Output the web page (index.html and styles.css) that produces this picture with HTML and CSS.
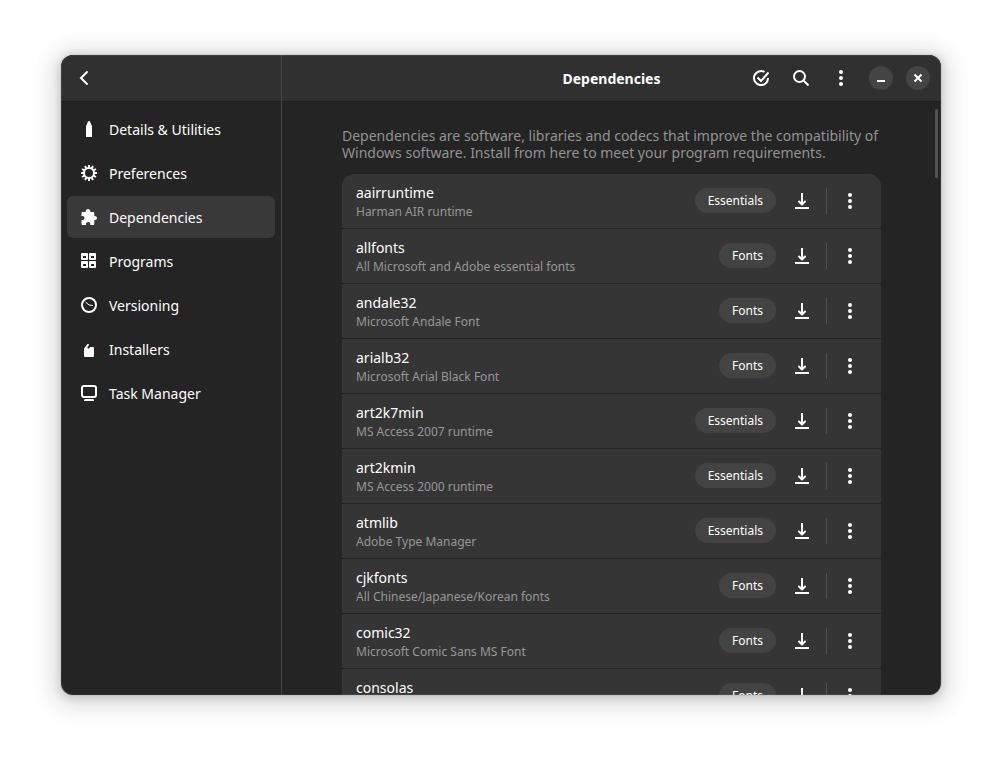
FILE: index.html
```html
<!DOCTYPE html>
<html lang="en">
<head>
<meta charset="utf-8">
<title>Dependencies</title>
<link rel="stylesheet" href="styles.css">
</head>
<body>
<svg class="sprite" aria-hidden="true">
  <symbol id="i-download" viewBox="0 0 16 16"><path d="M7 0h2v11H7zM1 14h14v2H1z"/><path class="line" stroke-linecap="round" stroke-linejoin="round" d="M5 8.500 8 11.500l3-3"/></symbol>
  <symbol id="i-more" viewBox="0 0 16 16"><circle cx="8" cy="2" r="2"/><circle cx="8" cy="8" r="2"/><circle cx="8" cy="14" r="2"/></symbol>
</svg>
<div class="window">
  <aside class="sidebar">
    <header class="bar bar-side">
      <button class="icon-button" aria-label="Back"><svg class="icon" viewBox="0 0 16 16"><path class="line chevron" d="M11 2 5 8l6 6"/></svg></button>
    </header>
    <nav class="nav">
      <a class="nav-item" href="#details"><svg class="icon" viewBox="0 0 16 16"><path d="M8 0c1 0 1.300.8 1.600 2L11 5v11H5V5l1.400-3C6.700.8 7 0 8 0z"/></svg>Details &amp; Utilities</a>
      <a class="nav-item" href="#preferences"><svg class="icon" viewBox="0 0 16 16"><circle class="line" cx="8" cy="8" r="5"/><path class="teeth" d="M8 0v3M8 13v3M0 8h3M13 8h3M4 1.070l1.500 2.600M10.500 12.330l1.500 2.600M1.070 4l2.600 1.500M12.330 10.500l2.600 1.500M1.070 12l2.600-1.500M12.330 5.500l2.600-1.500M4 14.930l1.500-2.600M10.500 3.670l1.500-2.600"/></svg>Preferences</a>
      <a class="nav-item active" href="#dependencies" aria-current="page"><svg class="icon" viewBox="0 0 16 16"><path d="M7 0c1.400 0 2.300 1 2.300 2.200V3H12c.8 0 1.300.5 1.300 1.300V7h.5C15.200 7 16 8 16 9s-.8 2-2.200 2h-.5v3.700c0 .8-.5 1.300-1.300 1.300H9.300v-.8c0-1.300-.9-2.200-2.100-2.200S5 13.900 5 15.200v.8H2c-.9 0-1.500-.5-1.500-1.300V11h1c1.200 0 2-.8 2-2s-.8-2-2-2h-1V4.300C.5 3.500 1.100 3 2 3h2.700v-.8C4.700 1 5.600 0 7 0z"/></svg>Dependencies</a>
      <a class="nav-item" href="#programs"><svg class="icon" viewBox="0 0 16 16"><path fill-rule="evenodd" d="M1 0h5q1 0 1 1v5q0 1-1 1H1q-1 0-1-1V1q0-1 1-1zm1 3v2h3V3zM9 0h5q1 0 1 1v5q0 1-1 1H9q-1 0-1-1V1q0-1 1-1zm1 3v2h3V3zM1 8h5q1 0 1 1v5q0 1-1 1H1q-1 0-1-1V9q0-1 1-1zm1 3v2h3v-2zM9 8h5q1 0 1 1v5q0 1-1 1H9q-1 0-1-1V9q0-1 1-1zm1 3v2h3v-2z"/></svg>Programs</a>
      <a class="nav-item" href="#versioning"><svg class="icon" viewBox="0 0 16 16"><circle class="line" cx="8" cy="8" r="7"/><path class="hand" d="M4.500 5 8 8l4 .5"/></svg>Versioning</a>
      <a class="nav-item" href="#installers"><svg class="icon" viewBox="0 0 16 16"><path d="M3 7.500 6.500 3h1.300v1.200L6.500 6v1.500h1.300L9.300 6H12q1 0 1 1v8q0 1-1 1H4q-1 0-1-1z"/></svg>Installers</a>
      <a class="nav-item" href="#tasks"><svg class="icon" viewBox="0 0 16 16"><rect class="line" x="1" y="1" width="14" height="11" rx="2"/><path d="M4 14h8q1 0 1 2H3q0-2 1-2z"/></svg>Task Manager</a>
    </nav>
  </aside>
  <main class="content">
    <header class="bar bar-main">
      <h1 class="title">Dependencies</h1>
      <div class="bar-actions">
        <button class="icon-button" aria-label="Installed"><svg class="icon" viewBox="0 0 16 16"><path class="line" d="M11.500 2A7 7 0 1 0 15 8M4.500 7.500 8 11l7.500-8.500"/></svg></button>
        <button class="icon-button" aria-label="Search"><svg class="icon" viewBox="0 0 16 16"><circle class="line" cx="6.500" cy="6.500" r="5.500"/><path class="line" d="m10.500 10.500 5 5"/></svg></button>
        <button class="icon-button" aria-label="Main menu"><svg class="icon"><use href="#i-more"/></svg></button>
        <div class="controls">
          <button class="control" aria-label="Minimize"><svg class="icon" viewBox="0 0 16 16"><path d="M4 10h8v2H4z"/></svg></button>
          <button class="control" aria-label="Close"><svg class="icon" viewBox="0 0 16 16"><path class="line" d="m4.500 4.500 7 7m0-7-7 7"/></svg></button>
        </div>
      </div>
    </header>
    <div class="scroller">
      <p class="description">Dependencies are software, libraries and codecs that improve the compatibility of Windows software. Install from here to meet your program requirements.</p>
      <ul class="list">
        <li class="row"><div class="names"><span class="name">aairruntime</span><span class="detail">Harman AIR runtime</span></div><button class="tag">Essentials</button><button class="icon-button" aria-label="Install aairruntime"><svg class="icon"><use href="#i-download"/></svg></button><span class="separator"></span><button class="icon-button" aria-label="More about aairruntime"><svg class="icon"><use href="#i-more"/></svg></button></li>
        <li class="row"><div class="names"><span class="name">allfonts</span><span class="detail">All Microsoft and Adobe essential fonts</span></div><button class="tag">Fonts</button><button class="icon-button" aria-label="Install allfonts"><svg class="icon"><use href="#i-download"/></svg></button><span class="separator"></span><button class="icon-button" aria-label="More about allfonts"><svg class="icon"><use href="#i-more"/></svg></button></li>
        <li class="row"><div class="names"><span class="name">andale32</span><span class="detail">Microsoft Andale Font</span></div><button class="tag">Fonts</button><button class="icon-button" aria-label="Install andale32"><svg class="icon"><use href="#i-download"/></svg></button><span class="separator"></span><button class="icon-button" aria-label="More about andale32"><svg class="icon"><use href="#i-more"/></svg></button></li>
        <li class="row"><div class="names"><span class="name">arialb32</span><span class="detail">Microsoft Arial Black Font</span></div><button class="tag">Fonts</button><button class="icon-button" aria-label="Install arialb32"><svg class="icon"><use href="#i-download"/></svg></button><span class="separator"></span><button class="icon-button" aria-label="More about arialb32"><svg class="icon"><use href="#i-more"/></svg></button></li>
        <li class="row"><div class="names"><span class="name">art2k7min</span><span class="detail">MS Access 2007 runtime</span></div><button class="tag">Essentials</button><button class="icon-button" aria-label="Install art2k7min"><svg class="icon"><use href="#i-download"/></svg></button><span class="separator"></span><button class="icon-button" aria-label="More about art2k7min"><svg class="icon"><use href="#i-more"/></svg></button></li>
        <li class="row"><div class="names"><span class="name">art2kmin</span><span class="detail">MS Access 2000 runtime</span></div><button class="tag">Essentials</button><button class="icon-button" aria-label="Install art2kmin"><svg class="icon"><use href="#i-download"/></svg></button><span class="separator"></span><button class="icon-button" aria-label="More about art2kmin"><svg class="icon"><use href="#i-more"/></svg></button></li>
        <li class="row"><div class="names"><span class="name">atmlib</span><span class="detail">Adobe Type Manager</span></div><button class="tag">Essentials</button><button class="icon-button" aria-label="Install atmlib"><svg class="icon"><use href="#i-download"/></svg></button><span class="separator"></span><button class="icon-button" aria-label="More about atmlib"><svg class="icon"><use href="#i-more"/></svg></button></li>
        <li class="row"><div class="names"><span class="name">cjkfonts</span><span class="detail">All Chinese/Japanese/Korean fonts</span></div><button class="tag">Fonts</button><button class="icon-button" aria-label="Install cjkfonts"><svg class="icon"><use href="#i-download"/></svg></button><span class="separator"></span><button class="icon-button" aria-label="More about cjkfonts"><svg class="icon"><use href="#i-more"/></svg></button></li>
        <li class="row"><div class="names"><span class="name">comic32</span><span class="detail">Microsoft Comic Sans MS Font</span></div><button class="tag">Fonts</button><button class="icon-button" aria-label="Install comic32"><svg class="icon"><use href="#i-download"/></svg></button><span class="separator"></span><button class="icon-button" aria-label="More about comic32"><svg class="icon"><use href="#i-more"/></svg></button></li>
        <li class="row"><div class="names"><span class="name">consolas</span></div><button class="tag">Fonts</button><button class="icon-button" aria-label="Install consolas"><svg class="icon"><use href="#i-download"/></svg></button><span class="separator"></span><button class="icon-button" aria-label="More about consolas"><svg class="icon"><use href="#i-more"/></svg></button></li>
      </ul>
    </div>
    <span class="thumb"></span>
  </main>
</div>
</body>
</html>
```
FILE: styles.css
```css
* { box-sizing: border-box; }

body {
  margin: 0;
  height: 100vh;
  padding: 55px 61px 67px;
  display: flex;
  background: #fff;
  color: #fff;
  font: 14px/17px "Noto Sans", sans-serif;
}

button {
  margin: 0;
  padding: 0;
  border: 0;
  background: none;
  color: inherit;
  font: inherit;
}

.sprite { display: none; }

.window {
  position: relative;
  flex: 1;
  min-width: 0;
  display: flex;
  overflow: hidden;
  border-radius: 12px;
  background: #242424;
  box-shadow: 0 2px 8px 2px rgba(0, 0, 0, .13), 0 3px 20px 10px rgba(0, 0, 0, .09), 0 6px 32px 16px rgba(0, 0, 0, .02), 0 0 0 1px rgba(0, 0, 0, .05);
}

.window::after {
  content: "";
  position: absolute;
  inset: 0;
  border: 1px solid rgba(255, 255, 255, .07);
  border-radius: inherit;
  pointer-events: none;
}

.sidebar {
  flex: none;
  width: 221px;
  border-right: 1px solid #474747;
}

.bar {
  height: 47px;
  background: #303030;
  border-bottom: 1px solid #1e1e1e;
  align-items: center;
}

.bar-side { display: flex; padding-left: 6px; }

.bar-main {
  flex: none;
  display: grid;
  grid-template-columns: 1fr auto 1fr;
  padding-right: 11px;
  padding-left: 11px;
}

.title {
  grid-column: 2;
  margin: 0;
  font-size: 14px;
  line-height: 17px;
  font-weight: 700;
}

.bar-actions {
  display: flex;
  align-items: center;
  justify-content: flex-end;
  gap: 6px;
}

.controls { display: flex; gap: 13px; padding-left: 5px; }

.control {
  width: 24px;
  height: 24px;
  display: grid;
  place-items: center;
  border-radius: 50%;
  background: #444;
}

.icon-button {
  width: 34px;
  height: 34px;
  display: grid;
  place-items: center;
}

.icon {
  display: block;
  flex: none;
  width: 16px;
  height: 16px;
  fill: currentColor;
}

.line, .teeth, .hand { fill: none; stroke: currentColor; stroke-width: 2; }
.chevron { stroke-linecap: round; }
.hand { stroke-width: 1; }

.nav { display: flex; flex-direction: column; gap: 2px; padding: 6px; }

.nav-item {
  display: flex;
  align-items: center;
  gap: 12px;
  height: 42px;
  padding: 0 14px;
  border-radius: 6px;
  color: inherit;
  text-decoration: none;
}

.active { background: #393939; }

.content {
  position: relative;
  flex: 1;
  min-width: 0;
  display: flex;
  flex-direction: column;
}

.scroller {
  flex: 1;
  min-height: 0;
  overflow: hidden;
  padding: 25px 60px 0;
}

.thumb {
  position: absolute;
  top: 54px;
  right: 3px;
  width: 3px;
  height: 69px;
  border-radius: 2px;
  background: #545454;
}

.description { margin: 0 0 13px; color: #929292; }

.list {
  margin: 0;
  padding: 0;
  list-style: none;
  overflow: hidden;
  border-radius: 12px;
  background: #353535;
}

.row {
  display: flex;
  align-items: center;
  height: 55px;
  padding: 0 14px;
  border-bottom: 1px solid #222;
}

.names {
  flex: 1;
  min-width: 0;
  align-self: flex-start;
  display: flex;
  flex-direction: column;
  gap: 2px;
  padding-top: 10px;
}

.detail { color: #979797; font-size: 12px; }

.tag {
  height: 25px;
  margin: 0 9px 1px 0;
  padding: 0 13px;
  border-radius: 13px;
  background: #434343;
  font-size: 12px;
}

.separator {
  width: 1px;
  height: 26px;
  margin: 0 6px 0 7px;
  background: #505050;
}
```
